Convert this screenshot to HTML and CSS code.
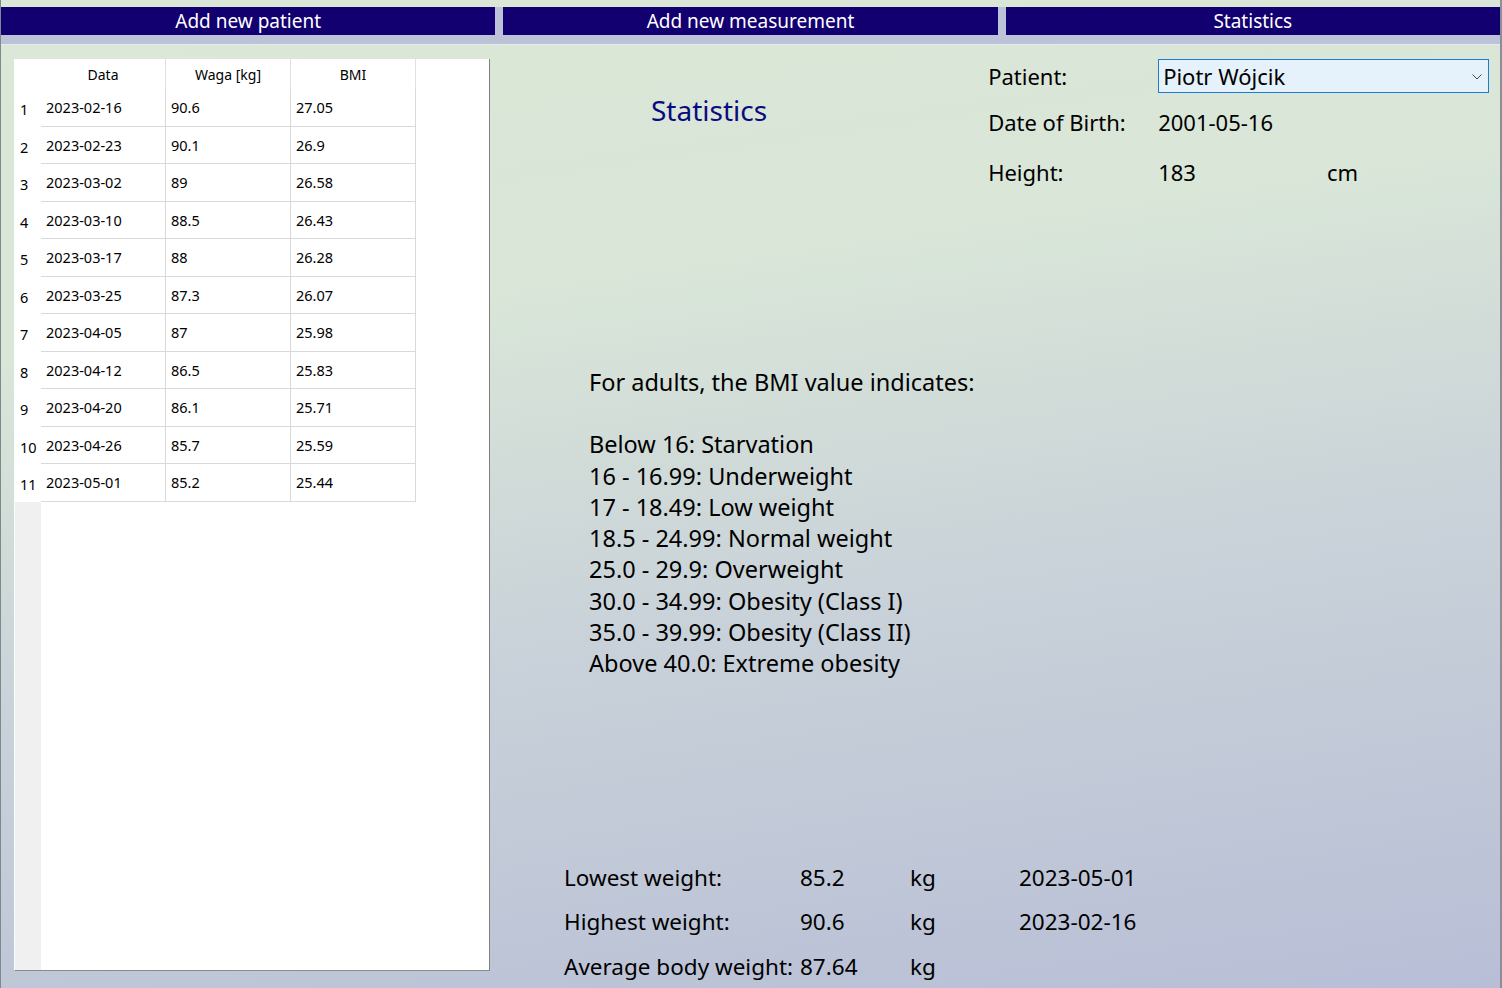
FILE: index.html
```html
<!DOCTYPE html>
<html lang="en">
<head>
<meta charset="utf-8">
<title>Statistics</title>
<link rel="stylesheet" href="styles.css">
</head>
<body>
<div class="window">
  <nav class="topbar">
    <div class="navbtn">Add new patient</div>
    <div class="navbtn">Add new measurement</div>
    <div class="navbtn">Statistics</div>
  </nav>
  <main class="content">
    <section class="grid-box">
      <div class="grid">
        <div class="rh"></div><div class="hc">Data</div><div class="hc">Waga [kg]</div><div class="hc">BMI</div>
        <div class="row"><div class="rh">1</div><div class="c">2023-02-16</div><div class="c">90.6</div><div class="c">27.05</div></div>
        <div class="row"><div class="rh">2</div><div class="c">2023-02-23</div><div class="c">90.1</div><div class="c">26.9</div></div>
        <div class="row"><div class="rh">3</div><div class="c">2023-03-02</div><div class="c">89</div><div class="c">26.58</div></div>
        <div class="row"><div class="rh">4</div><div class="c">2023-03-10</div><div class="c">88.5</div><div class="c">26.43</div></div>
        <div class="row"><div class="rh">5</div><div class="c">2023-03-17</div><div class="c">88</div><div class="c">26.28</div></div>
        <div class="row"><div class="rh">6</div><div class="c">2023-03-25</div><div class="c">87.3</div><div class="c">26.07</div></div>
        <div class="row"><div class="rh">7</div><div class="c">2023-04-05</div><div class="c">87</div><div class="c">25.98</div></div>
        <div class="row"><div class="rh">8</div><div class="c">2023-04-12</div><div class="c">86.5</div><div class="c">25.83</div></div>
        <div class="row"><div class="rh">9</div><div class="c">2023-04-20</div><div class="c">86.1</div><div class="c">25.71</div></div>
        <div class="row"><div class="rh">10</div><div class="c">2023-04-26</div><div class="c">85.7</div><div class="c">25.59</div></div>
        <div class="row"><div class="rh">11</div><div class="c">2023-05-01</div><div class="c">85.2</div><div class="c">25.44</div></div>
      </div>
      <div class="grid-fill"></div>
    </section>
    <section class="panel">
      <div class="panel-top">
        <h1 class="title">Statistics</h1>
        <div class="info">
          <div class="lbl">Patient:</div>
          <div class="combo"><span>Piotr Wójcik</span>
            <svg class="chev" width="10" height="6" viewBox="0 0 10 6"><path d="M0.5 0.5 L5 5 L9.5 0.5" fill="none" stroke="#444" stroke-width="1"/></svg>
          </div>
          <div class="lbl">Date of Birth:</div>
          <div class="val">2001-05-16</div>
          <div class="lbl">Height:</div>
          <div class="val height-val"><span>183</span><span class="unit">cm</span></div>
        </div>
      </div>
      <div class="bmi">
        <p class="bmi-head">For adults, the BMI value indicates:</p>
        <p>Below 16: Starvation<br>16 - 16.99: Underweight<br>17 - 18.49: Low weight<br>18.5 - 24.99: Normal weight<br>25.0 - 29.9: Overweight<br>30.0 - 34.99: Obesity (Class I)<br>35.0 - 39.99: Obesity (Class II)<br>Above 40.0: Extreme obesity</p>
      </div>
      <div class="stats">
        <div class="srow"><span class="s1">Lowest weight:</span><span class="s2">85.2</span><span class="s3">kg</span><span class="s4">2023-05-01</span></div>
        <div class="srow"><span class="s1">Highest weight:</span><span class="s2">90.6</span><span class="s3">kg</span><span class="s4">2023-02-16</span></div>
        <div class="srow"><span class="s1">Average body weight:</span><span class="s2">87.64</span><span class="s3">kg</span><span class="s4"></span></div>
      </div>
    </section>
  </main>
</div>
</body>
</html>
```
FILE: styles.css
```css
html, body {
  margin: 0;
  padding: 0;
  height: 100%;
}
body {
  font-family: "Noto Sans", "Open Sans", sans-serif;
  color: #000;
  overflow: hidden;
}
.window {
  width: 1502px;
  height: 988px;
  box-sizing: border-box;
  border-left: 1px solid #7b8a8a;
  border-right: 2px solid #8a8f96;
  background: linear-gradient(172deg, #dbe8d7 0%, #d9e6d8 30%, #c9d2d9 60%, #b8bed6 100%);
  display: flex;
  flex-direction: column;
  overflow: hidden;
}
.topbar {
  display: flex;
  gap: 8px;
  padding-top: 7px;
  background: linear-gradient(to bottom, transparent 0, transparent 7px, #bcc3d8 7px);
  border-bottom: 1px solid #e4ebee;
  height: 37px;
  box-sizing: content-box;
}
.navbtn {
  flex: 1;
  height: 28px;
  background: #130070;
  color: #fff;
  font-size: 19px;
  line-height: 28px;
  text-align: center;
}
.content {
  flex: 1;
  display: flex;
  padding: 14px 0 17px 13px;
  min-height: 0;
}
.grid-box {
  width: 476px;
  box-sizing: border-box;
  background: #fff;
  border-left: 1px solid #fdfdfd;
  border-right: 1px solid #808080;
  border-bottom: 1px solid #8a8a8a;
  display: flex;
  flex-direction: column;
}
.grid {
  display: grid;
  grid-template-columns: 26px 125px 125px 125px;
  font-size: 14.5px;
}
.row { display: contents; }
.hc {
  height: 30px;
  line-height: 32px;
  text-align: center;
  font-size: 14px;
  border-right: 1px solid #e2e2e2;
  box-sizing: border-box;
}
.c {
  line-height: 36px;
  padding-left: 5px;
  border-right: 1px solid #d9d9d9;
  border-bottom: 1px solid #d9d9d9;
  box-sizing: border-box;
}
.row:nth-child(odd) .c, .row:nth-child(odd) .rh { height: 38px; }
.row:nth-child(even) .c, .row:nth-child(even) .rh { height: 37px; }
.rh {
  padding-left: 5px;
  line-height: 40px;
  box-sizing: border-box;
}
.grid-fill {
  flex: 1;
  background: linear-gradient(to right, #f0f0f0 26px, #fff 26px);
}
.panel {
  flex: 1;
  display: flex;
  flex-direction: column;
}
.panel-top {
  display: flex;
  height: 140px;
}
.title {
  margin: 31px 0 0 161px;
  font-weight: normal;
  font-size: 28px;
  color: #0b0b80;
  line-height: 40px;
  height: 40px;
}
.info {
  margin-left: 221px;
  display: grid;
  grid-template-columns: 170px 331px;
  grid-template-rows: 34px 58px 42px;
  font-size: 22px;
  align-items: center;
}
.lbl, .val { line-height: 30px; }
.combo {
  height: 34px;
  box-sizing: border-box;
  border: 1px solid #1d7bd0;
  background: #e5f1fb;
  display: flex;
  align-items: center;
  justify-content: space-between;
  padding: 0 6px 0 4px;
}
.chev { margin-top: 1px; }
.height-val { display: flex; }
.height-val .unit { margin-left: 131px; }
.bmi {
  margin: 174px 0 0 99px;
  font-size: 23.5px;
  line-height: 31.3px;
}
.bmi p { margin: 0; }
.bmi-head { margin-bottom: 31px !important; }
.stats {
  margin: 176px 0 0 74px;
  font-size: 22.5px;
}
.srow {
  display: flex;
  height: 44.5px;
  line-height: 44px;
}
.s1 { width: 236px; }
.s2 { width: 110px; }
.s3 { width: 109px; }
```
